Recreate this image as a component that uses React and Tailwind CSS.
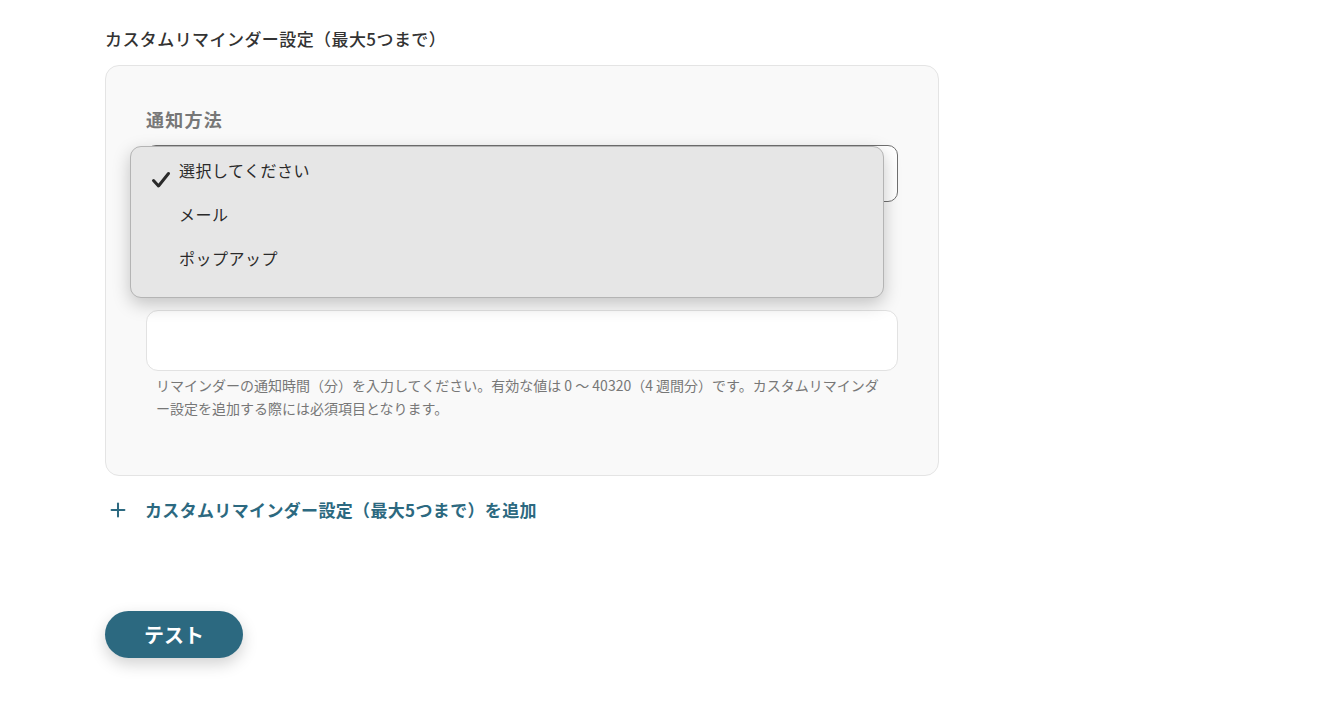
import React from 'react';
import { Plus } from 'lucide-react';

const FONT = { fontFamily: '"Noto Sans CJK JP", "Noto Sans", sans-serif' };

const OPTIONS = ['選択してください', 'メール', 'ポップアップ'];

const Check = () => (
  <svg width="20" height="20" viewBox="0 0 20 20" aria-hidden>
    <path d="M2.5 10.5 L7.5 16 L17.5 3.5" fill="none" stroke="#2a2a2a" strokeWidth="3" strokeLinecap="round" strokeLinejoin="round" />
  </svg>
);

const SelectMenu = () => (
  <div className="absolute left-[-16px] top-[1px] z-10 h-[152px] w-[754px] rounded-[11px] border border-[#b4b4b4] bg-[#e6e6e6] pt-[11px] shadow-[0_6px_18px_rgba(0,0,0,0.22)]">
    {OPTIONS.map((o, i) => (
      <div key={o} className="flex h-[44px] items-start">
        <div className="flex w-[48px] justify-end pr-[8px] pt-[12px]">{i === 0 ? <Check /> : null}</div>
        <span className="text-[16px] leading-[24px] tracking-[0.03em] text-[#2a2a2a]">{o}</span>
      </div>
    ))}
  </div>
);

export default function App() {
  return (
    <div className="min-h-[704px] bg-white pl-[105px] pt-[27px]" style={FONT}>
      <h2 className="text-[17px] font-medium leading-[24px] tracking-[0.025em] text-[#333]">カスタムリマインダー設定（最大5つまで）</h2>

      <div className="mt-[14px] w-[834px] rounded-[14px] border border-[#e4e4e4] bg-[#f9f9f9] px-[40px] pb-[55px] pt-[40px]">
        <label className="block text-[18px] font-semibold leading-[26px] tracking-[0.07em] text-[#777]">通知方法</label>
        <div className="relative mt-[13px]">
          <div className="h-[57px] rounded-[10px] border border-[#707070] bg-white" />
          <SelectMenu />
        </div>

        <div className="h-[108px]" />
        <div className="h-[61px] rounded-[12px] border border-[#e2e2e2] bg-white" />
        <p className="mt-[3px] px-[10px] text-[14px] leading-[23px] text-[#777]">
          リマインダーの通知時間（分）を入力してください。有効な値は 0 〜 40320（4 週間分）です。カスタムリマインダー設定を追加する際には必須項目となります。
        </p>
      </div>

      <button className="mt-[22px] flex items-center gap-[16px] text-[#2c6980]">
        <Plus size={22} strokeWidth={2.2} className="ml-[2px]" />
        <span className="text-[17px] font-bold leading-[24px] tracking-[0.02em]">カスタムリマインダー設定（最大5つまで）を追加</span>
      </button>

      <button className="mt-[89px] h-[47px] w-[138px] rounded-full bg-[#2c6980] text-[20px] font-bold text-white shadow-[0_6px_16px_rgba(0,0,0,0.18)]">
        テスト
      </button>
    </div>
  );
}
